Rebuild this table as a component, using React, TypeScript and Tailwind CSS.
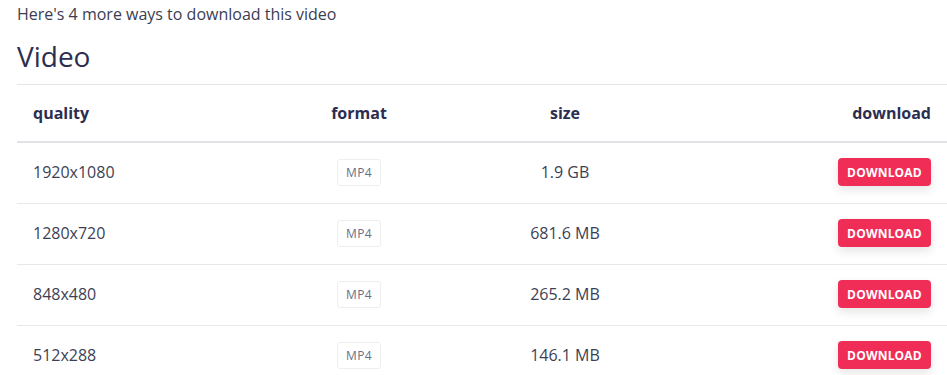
const rows = [
  { quality: '1920x1080', format: 'MP4', size: '1.9 GB' },
  { quality: '1280x720', format: 'MP4', size: '681.6 MB' },
  { quality: '848x480', format: 'MP4', size: '265.2 MB' },
  { quality: '512x288', format: 'MP4', size: '146.1 MB' },
]

export default function App() {
  return (
    <div className="min-h-[375px] bg-white pl-[17px] font-['Open_Sans',sans-serif]">
      <p className="pt-[3px] text-[16px] leading-[22px] text-[#3b3d52]">Here's 4 more ways to download this video</p>
      <h2 className="mt-[14px] text-[28px] leading-[34px] text-[#2c2e4f]">Video</h2>

      <div className="mt-[11px] border-t border-[#e3e5e8]">
        {/* Header */}
        <div className="grid h-[58px] grid-cols-[239px_206px_206px_1fr] items-center border-b-2 border-[#e0e2e5] text-[16px] font-bold text-[#2c2e4f]">
          <div className="pl-4">quality</div>
          <div className="text-center">format</div>
          <div className="text-center">size</div>
          <div className="pr-4 text-right">download</div>
        </div>

        {/* Rows */}
        {rows.map((row) => (
          <div
            key={row.quality}
            className="grid h-[61px] grid-cols-[239px_206px_206px_1fr] items-center border-b border-[#e6e8eb] pb-[2px] text-[16px] text-[#3d3f55]"
          >
            <div className="pl-4">{row.quality}</div>
            <div className="flex justify-center">
              <span className="flex h-[27px] w-[44px] items-center justify-center rounded-[3px] border border-[#eceef0] pt-px text-[12px] tracking-[0.4px] text-[#66708a]">
                {row.format}
              </span>
            </div>
            <div className="text-center">{row.size}</div>
            <div className="flex justify-end pr-4">
              <button className="h-[28px] w-[93px] rounded-[4px] bg-[#f02d57] pt-px text-[12px] font-bold tracking-[0.2px] text-white shadow-[0_4px_10px_rgba(40,40,60,0.12)]">
                DOWNLOAD
              </button>
            </div>
          </div>
        ))}
      </div>
    </div>
  )
}
